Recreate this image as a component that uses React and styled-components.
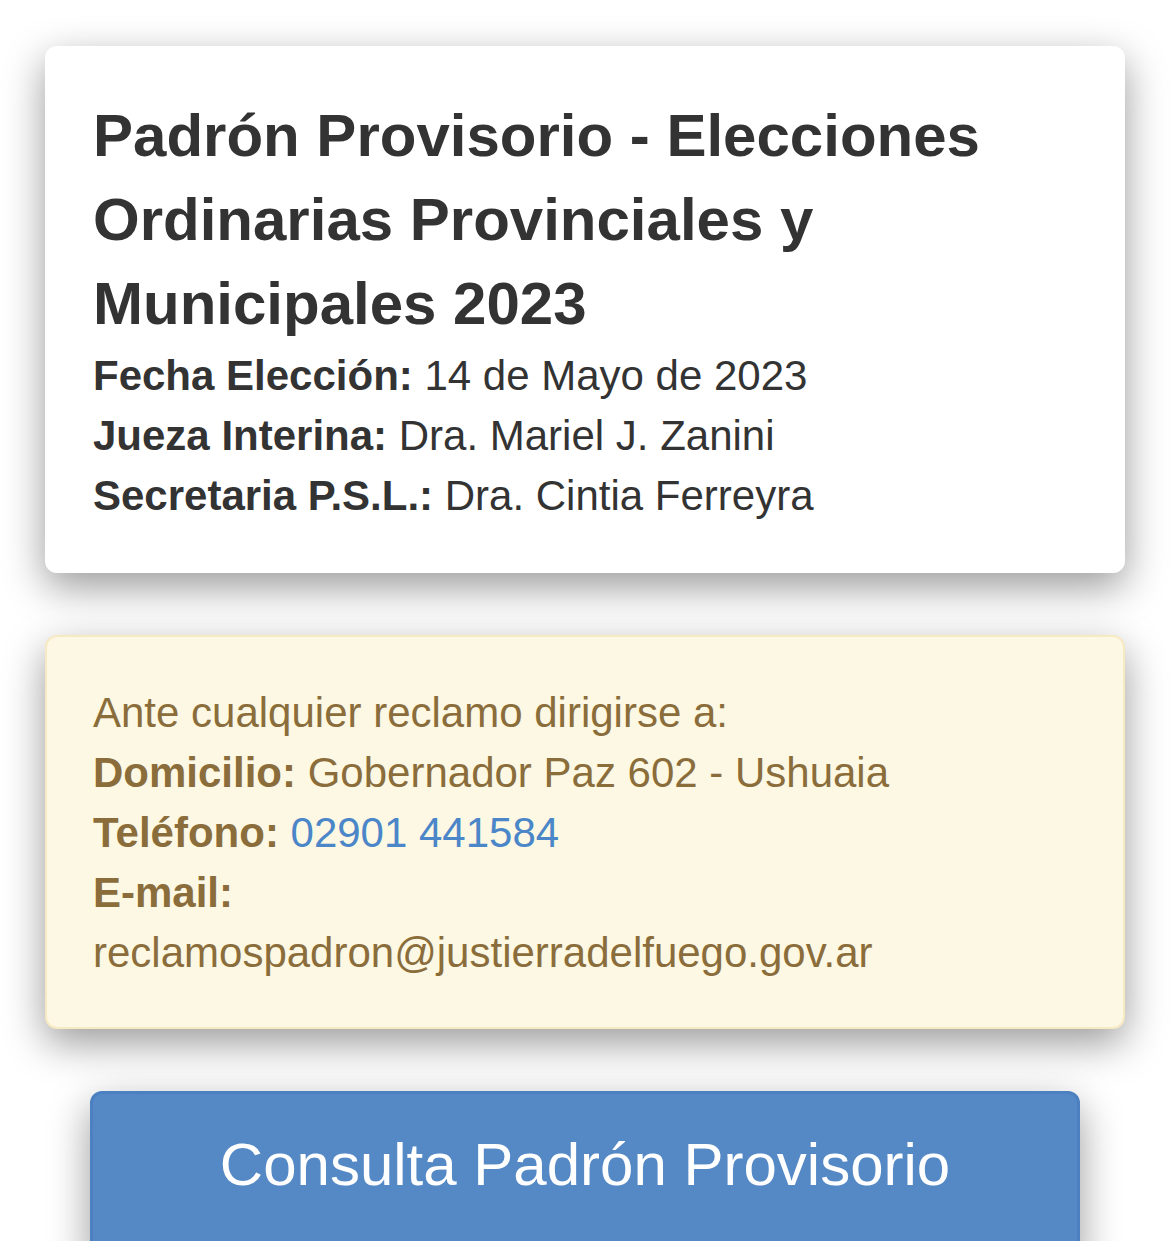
import React from "react";
import styled, { createGlobalStyle } from "styled-components";

const Global = createGlobalStyle`
  html, body { margin: 0; padding: 0; background: #ffffff; }
  body { font-family: "Liberation Sans", Arial, Helvetica, sans-serif; }
  * { box-sizing: border-box; }
`;

const Page = styled.div`
  display: flex;
  flex-direction: column;
  gap: 62px;
  padding: 46px 45px 0;
  height: 1241px;
  overflow: hidden;
`;

const shadow = "0 14px 40px rgba(0, 0, 0, 0.4)";

const Card = styled.section`
  background: #ffffff;
  border-radius: 12px;
  padding: 48px 48px 47px;
  box-shadow: ${shadow};
  color: #333333;
`;

const Alert = styled.section`
  background: #fcf8e3;
  border: 2px solid #f7e9c3;
  border-radius: 12px;
  padding: 46px 46px 44px;
  box-shadow: ${shadow};
  color: #8a6d3b;
`;

const Title = styled.h2`
  margin: 0;
  font-size: 60px;
  line-height: 84px;
  font-weight: 700;
  color: #333333;
`;

const Line = styled.div`
  font-size: 42px;
  line-height: 60px;
`;

const Label = styled.b`
  font-weight: 700;
`;

const Link = styled.a`
  color: #4a86c8;
  text-decoration: none;
`;

const ButtonWrap = styled.div`
  padding: 0 45px;
`;

const Button = styled.a`
  display: block;
  text-align: center;
  background: #5589c6;
  border: 3px solid #4c80c0;
  border-radius: 12px;
  padding: 31px 40px 60px;
  font-size: 60px;
  line-height: 80px;
  color: #ffffff;
  text-decoration: none;
  box-shadow: ${shadow};
`;

export default function App() {
  return (
    <>
      <Global />
      <Page>
        <Card>
          <Title>Padrón Provisorio - Elecciones Ordinarias Provinciales y Municipales 2023</Title>
          <Line><Label>Fecha Elección:</Label> 14 de Mayo de 2023</Line>
          <Line><Label>Jueza Interina:</Label> Dra. Mariel J. Zanini</Line>
          <Line><Label>Secretaria P.S.L.:</Label> Dra. Cintia Ferreyra</Line>
        </Card>
        <Alert>
          <Line>Ante cualquier reclamo dirigirse a:</Line>
          <Line><Label>Domicilio:</Label> Gobernador Paz 602 - Ushuaia</Line>
          <Line><Label>Teléfono:</Label> <Link href="#">02901 441584</Link></Line>
          <Line><Label>E-mail:</Label></Line>
          <Line>reclamospadron@justierradelfuego.gov.ar</Line>
        </Alert>
        <ButtonWrap>
          <Button href="#">Consulta Padrón Provisorio</Button>
        </ButtonWrap>
      </Page>
    </>
  );
}
